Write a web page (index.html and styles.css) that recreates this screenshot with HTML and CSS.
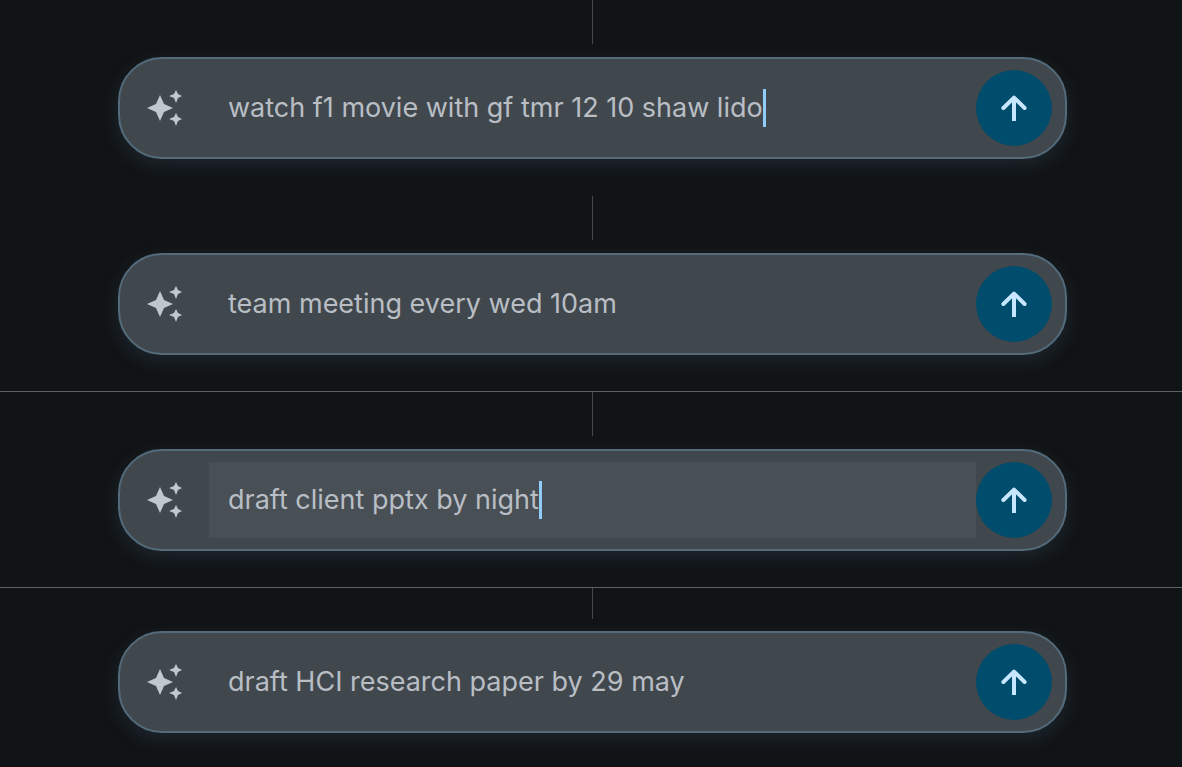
FILE: index.html
```
<!DOCTYPE html>
<html lang="en">
<head>
  <meta charset="UTF-8">
  <meta name="viewport" content="width=device-width, initial-scale=1.0">
  <title>Quick add</title>
  <link rel="stylesheet" href="styles.css">
</head>
<body>

  <!-- shared icons -->
  <svg class="icon-defs" aria-hidden="true">
    <symbol id="sparkles" viewBox="0 0 36 36">
      <path d="M13 5 L17 14 L26 18 L17 22 L13 31 L9 22 L0 18 L9 14 Z"/>
      <path d="M29 0 L31 4 L35 6 L31 8 L29 13 L27 8 L22 6 L27 4 Z"/>
      <path d="M29 23 L31 27 L35 29 L31 31 L29 36 L27 31 L22 29 L27 27 Z"/>
    </symbol>
    <symbol id="arrow-up" viewBox="0 0 26 26">
      <path d="M13 26 V3 M2.4 13 L13 2.6 L23.6 13"/>
    </symbol>
  </svg>

  <main class="panels">
    <section class="panel">
      <div class="stem"></div>
      <form class="prompt">
        <svg class="sparkles"><use href="#sparkles"/></svg>
        <label class="field">
          <input type="text" aria-label="New event" value="watch f1 movie with gf tmr 12 10 shaw lido">
          <span class="caret"></span>
        </label>
        <button class="send" type="button" aria-label="Send">
          <svg><use href="#arrow-up"/></svg>
        </button>
      </form>
    </section>

    <section class="panel ruled">
      <div class="stem"></div>
      <form class="prompt">
        <svg class="sparkles"><use href="#sparkles"/></svg>
        <label class="field">
          <input type="text" aria-label="New event" value="team meeting every wed 10am">
        </label>
        <button class="send" type="button" aria-label="Send">
          <svg><use href="#arrow-up"/></svg>
        </button>
      </form>
    </section>

    <section class="panel ruled">
      <div class="stem"></div>
      <form class="prompt">
        <svg class="sparkles"><use href="#sparkles"/></svg>
        <label class="field active">
          <input type="text" aria-label="New event" value="draft client pptx by night">
          <span class="caret"></span>
        </label>
        <button class="send" type="button" aria-label="Send">
          <svg><use href="#arrow-up"/></svg>
        </button>
      </form>
    </section>

    <section class="panel">
      <div class="stem short"></div>
      <form class="prompt">
        <svg class="sparkles"><use href="#sparkles"/></svg>
        <label class="field">
          <input type="text" aria-label="New event" value="draft HCI research paper by 29 may">
        </label>
        <button class="send" type="button" aria-label="Send">
          <svg><use href="#arrow-up"/></svg>
        </button>
      </form>
    </section>
  </main>

</body>
</html>
```
FILE: styles.css
```
* {
  box-sizing: border-box;
}

body {
  margin: 0;
  background-color: #111416;
  font-family: Inter, "Liberation Sans", sans-serif;
}

.icon-defs {
  display: none;
}

.panel {
  display: flex;
  flex-direction: column;
  align-items: center;
  padding: 0 115px 37px 118px;
}

.panel.ruled {
  padding-bottom: 36px;
  border-bottom: 1px solid #5d6163;
}

.stem {
  width: 1px;
  height: 44px;
  margin-bottom: 13px;
  background-color: #43484b;
}

.stem.short {
  height: 31px;
  margin-bottom: 12px;
}

.prompt {
  display: flex;
  align-items: center;
  width: 100%;
  padding: 11px 13px 11px 27px;
  border: 2px solid #536b7b;
  border-radius: 44px;
  background-color: #41484d;
  box-shadow: 0 6px 18px rgba(72, 108, 136, 0.22);
}

.sparkles {
  flex: none;
  width: 36px;
  height: 36px;
  margin-right: 26px;
  fill: #c1c7ce;
}

.field {
  display: flex;
  flex: 1;
  align-items: center;
  min-width: 0;
  height: 76px;
  padding: 0 19px;
}

.field.active {
  background-color: #484f55;
}

.field input {
  field-sizing: content;
  min-width: 0;
  padding: 0;
  border: none;
  outline: none;
  background: none;
  color: #b9bec5;
  font-family: inherit;
  font-size: 27px;
  line-height: 38px;
}

.caret {
  flex: none;
  width: 3px;
  height: 38px;
  background-color: #8fcdf8;
}

.send {
  display: flex;
  flex: none;
  align-items: center;
  justify-content: center;
  width: 76px;
  height: 76px;
  padding: 0;
  border: none;
  border-radius: 50%;
  background-color: #004c6c;
  cursor: pointer;
}

.send svg {
  width: 26px;
  height: 26px;
  fill: none;
  stroke: #c6e7ff;
  stroke-width: 4;
  stroke-linecap: round;
  stroke-linejoin: round;
}
```
